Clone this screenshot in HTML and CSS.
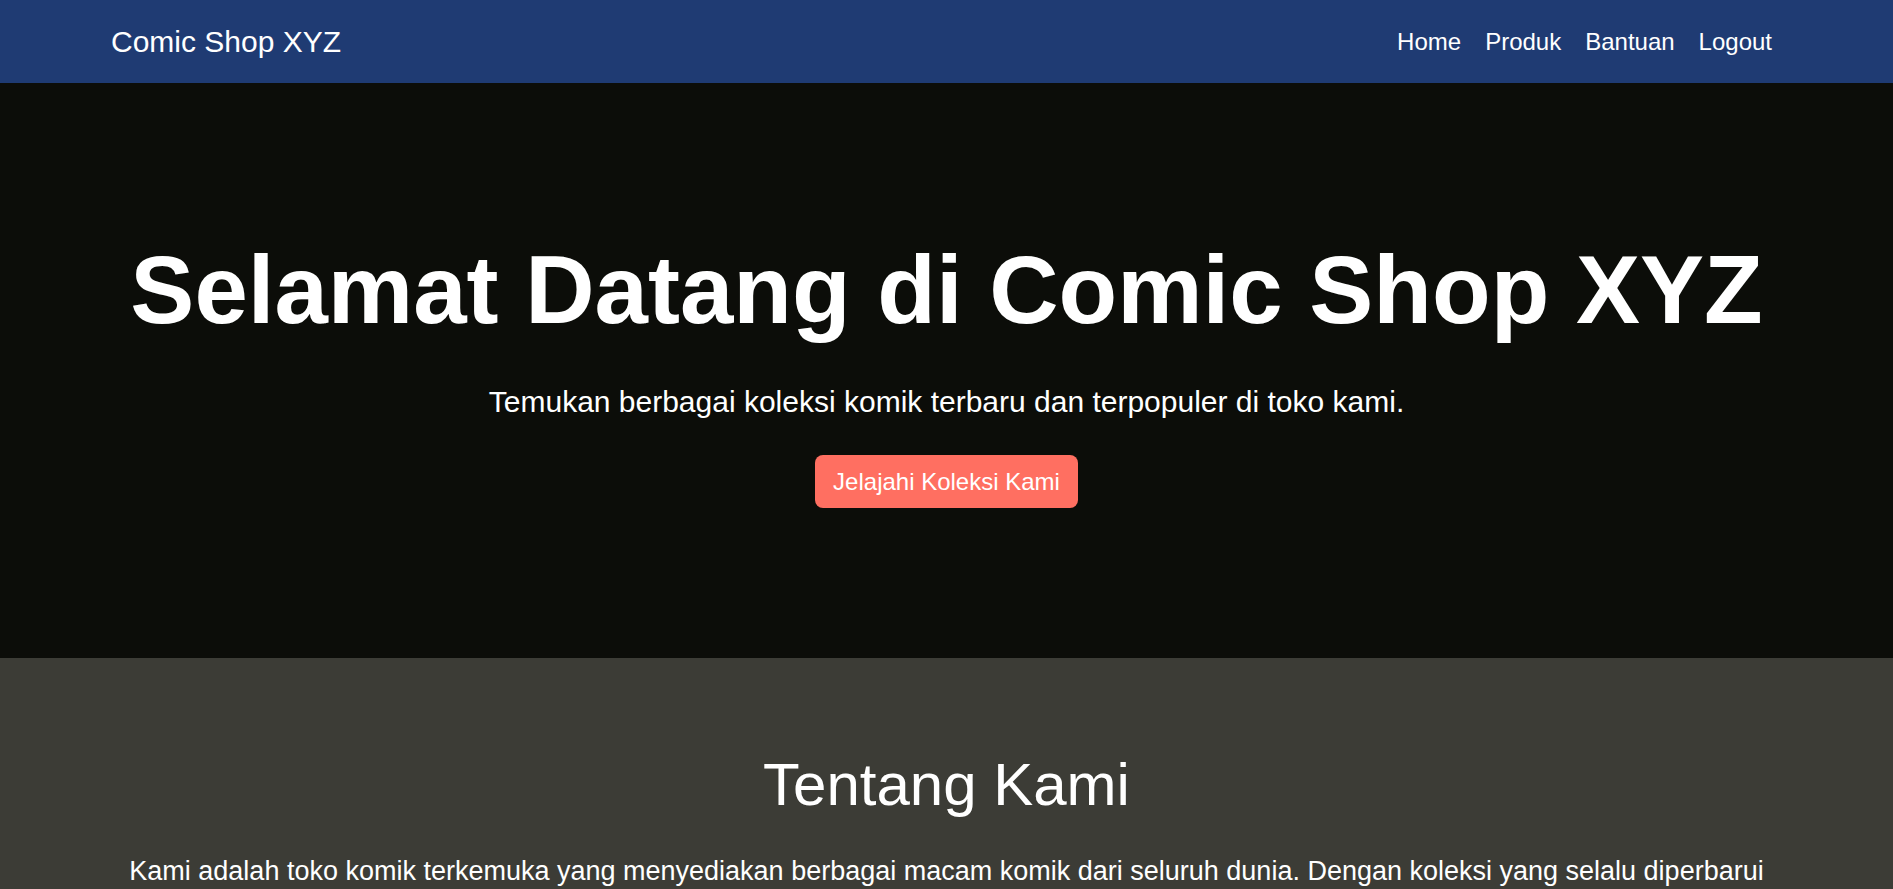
FILE: index.html
```html
<!DOCTYPE html>
<html lang="id">
<head>
<meta charset="utf-8">
<title>Comic Shop XYZ</title>
<link rel="stylesheet" href="styles.css">
</head>
<body>
<header class="navbar">
  <a class="brand" href="#">Comic Shop XYZ</a>
  <nav class="nav-links">
    <a href="#">Home</a>
    <a href="#">Produk</a>
    <a href="#">Bantuan</a>
    <a href="#">Logout</a>
  </nav>
</header>
<section class="hero">
  <h1 class="hero-title">Selamat Datang di Comic Shop XYZ</h1>
  <p class="hero-sub">Temukan berbagai koleksi komik terbaru dan terpopuler di toko kami.</p>
  <a class="hero-btn" href="#">Jelajahi Koleksi Kami</a>
</section>
<section class="about">
  <h2 class="about-title">Tentang Kami</h2>
  <p class="about-text">Kami adalah toko komik terkemuka yang menyediakan berbagai macam komik dari seluruh dunia. Dengan koleksi yang selalu diperbarui setiap minggu, kami siap memenuhi kebutuhan para penggemar komik di seluruh Indonesia.</p>
</section>
</body>
</html>
```
FILE: styles.css
```css
* { box-sizing: border-box; }
html, body { margin: 0; padding: 0; }
body {
  font-family: "Liberation Sans", Arial, sans-serif;
  color: #ffffff;
  background: #3c3c36;
}
a { color: #ffffff; text-decoration: none; }

.navbar {
  height: 83px;
  background: #1f3b73;
  display: flex;
  align-items: center;
  justify-content: space-between;
  padding: 0 121px 0 111px;
}
.brand { font-size: 30px; }
.nav-links { display: flex; gap: 24px; font-size: 24px; }

.hero {
  background: #0c0d09;
  padding: 152px 20px 150px;
  display: flex;
  flex-direction: column;
  align-items: center;
  text-align: center;
}
.hero-title {
  margin: 0;
  font-size: 96px;
  font-weight: bold;
}
.hero-sub {
  margin: 40px 0 36px;
  font-size: 30px;
}
.hero-btn {
  display: inline-block;
  background: #ff6f61;
  border-radius: 8px;
  font-size: 24px;
  height: 53px;
  line-height: 53px;
  padding: 0 18.5px;
}

.about {
  background: #3c3c36;
  padding: 92px 111px 60px;
  text-align: center;
}
.about-title {
  margin: 0;
  font-size: 60px;
  font-weight: normal;
}
.about-text {
  margin: 31px 0 0;
  font-size: 27px;
  line-height: 1.6;
}
```
